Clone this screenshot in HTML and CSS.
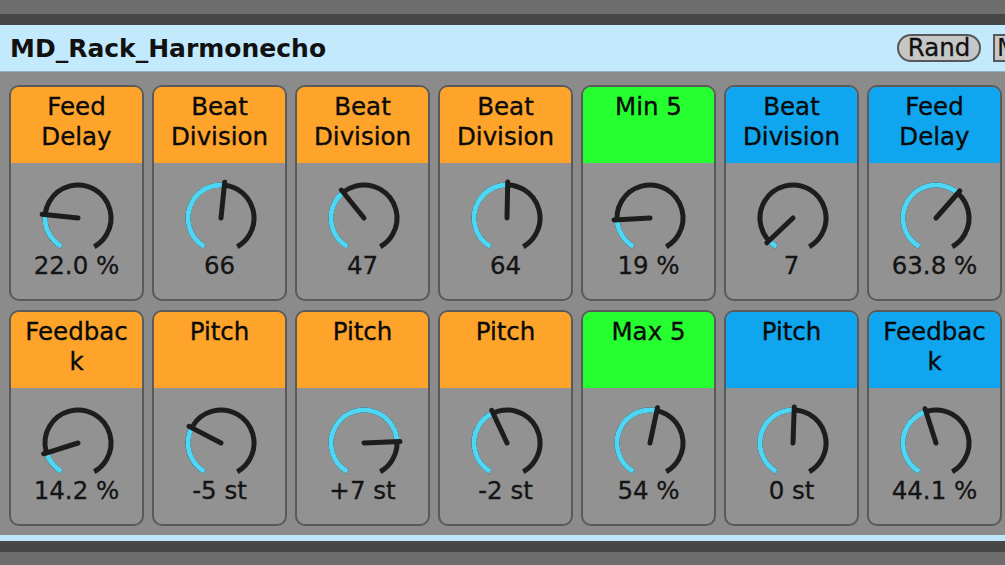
FILE: index.html
```html
<!DOCTYPE html>
<html>
<head>
<meta charset="utf-8">
<link rel="stylesheet" href="styles.css">
</head>
<body>
<div class="band-light"></div>
<div class="band-dark"></div>
<div class="titlebar">
  <div class="title">MD_Rack_Harmonecho</div>
  <div class="btn-rand">Rand</div>
  <div class="btn-map">Map</div>
</div>
<div class="rack">
  <!-- row 1 -->
  <div class="card"><div class="head orange">Feed<br>Delay</div><div class="body">
    <svg class="knob" viewBox="0 0 80 74"><circle class="track" cx="40" cy="40" r="33" transform="rotate(120 40 40)"/><circle class="fill" cx="40" cy="40" r="33" stroke-dasharray="38.01 300" transform="rotate(120 40 40)"/><line class="needle" x1="40" y1="40" x2="40" y2="4" transform="rotate(-84 40 40)"/></svg>
    <div class="val">22.0 %</div></div></div>
  <div class="card"><div class="head orange">Beat<br>Division</div><div class="body">
    <svg class="knob" viewBox="0 0 80 74"><circle class="track" cx="40" cy="40" r="33" transform="rotate(120 40 40)"/><circle class="fill" cx="40" cy="40" r="33" stroke-dasharray="89.80 300" transform="rotate(120 40 40)"/><line class="needle" x1="40" y1="40" x2="40" y2="4" transform="rotate(5.9 40 40)"/></svg>
    <div class="val">66</div></div></div>
  <div class="card"><div class="head orange">Beat<br>Division</div><div class="body">
    <svg class="knob" viewBox="0 0 80 74"><circle class="track" cx="40" cy="40" r="33" transform="rotate(120 40 40)"/><circle class="fill" cx="40" cy="40" r="33" stroke-dasharray="63.95 300" transform="rotate(120 40 40)"/><line class="needle" x1="40" y1="40" x2="40" y2="4" transform="rotate(-39 40 40)"/></svg>
    <div class="val">47</div></div></div>
  <div class="card"><div class="head orange">Beat<br>Division</div><div class="body">
    <svg class="knob" viewBox="0 0 80 74"><circle class="track" cx="40" cy="40" r="33" transform="rotate(120 40 40)"/><circle class="fill" cx="40" cy="40" r="33" stroke-dasharray="87.07 300" transform="rotate(120 40 40)"/><line class="needle" x1="40" y1="40" x2="40" y2="4" transform="rotate(1.2 40 40)"/></svg>
    <div class="val">64</div></div></div>
  <div class="card"><div class="head green">Min 5</div><div class="body">
    <svg class="knob" viewBox="0 0 80 74"><circle class="track" cx="40" cy="40" r="33" transform="rotate(120 40 40)"/><circle class="fill" cx="40" cy="40" r="33" stroke-dasharray="32.83 300" transform="rotate(120 40 40)"/><line class="needle" x1="40" y1="40" x2="40" y2="4" transform="rotate(-93 40 40)"/></svg>
    <div class="val">19 %</div></div></div>
  <div class="card"><div class="head blue">Beat<br>Division</div><div class="body">
    <svg class="knob" viewBox="0 0 80 74"><circle class="track" cx="40" cy="40" r="33" transform="rotate(120 40 40)"/><circle class="fill" cx="40" cy="40" r="33" stroke-dasharray="9.52 300" transform="rotate(120 40 40)"/><line class="needle" x1="40" y1="40" x2="40" y2="4" transform="rotate(-133.5 40 40)"/></svg>
    <div class="val">7</div></div></div>
  <div class="card"><div class="head blue">Feed<br>Delay</div><div class="body">
    <svg class="knob" viewBox="0 0 80 74"><circle class="track" cx="40" cy="40" r="33" transform="rotate(120 40 40)"/><circle class="fill" cx="40" cy="40" r="33" stroke-dasharray="110.24 300" transform="rotate(120 40 40)"/><line class="needle" x1="40" y1="40" x2="40" y2="4" transform="rotate(41.4 40 40)"/></svg>
    <div class="val">63.8 %</div></div></div>
  <!-- row 2 -->
  <div class="card"><div class="head orange">Feedbac<br>k</div><div class="body">
    <svg class="knob" viewBox="0 0 80 74"><circle class="track" cx="40" cy="40" r="33" transform="rotate(120 40 40)"/><circle class="fill" cx="40" cy="40" r="33" stroke-dasharray="24.54 300" transform="rotate(120 40 40)"/><line class="needle" x1="40" y1="40" x2="40" y2="4" transform="rotate(-107.4 40 40)"/></svg>
    <div class="val">14.2 %</div></div></div>
  <div class="card"><div class="head orange">Pitch</div><div class="body">
    <svg class="knob" viewBox="0 0 80 74"><circle class="track" cx="40" cy="40" r="33" transform="rotate(120 40 40)"/><circle class="fill" cx="40" cy="40" r="33" stroke-dasharray="50.40 300" transform="rotate(120 40 40)"/><line class="needle" x1="40" y1="40" x2="40" y2="4" transform="rotate(-62.5 40 40)"/></svg>
    <div class="val">-5 st</div></div></div>
  <div class="card"><div class="head orange">Pitch</div><div class="body">
    <svg class="knob" viewBox="0 0 80 74"><circle class="track" cx="40" cy="40" r="33" transform="rotate(120 40 40)"/><circle class="fill" cx="40" cy="40" r="33" stroke-dasharray="136.79 300" transform="rotate(120 40 40)"/><line class="needle" x1="40" y1="40" x2="40" y2="4" transform="rotate(87.5 40 40)"/></svg>
    <div class="val">+7 st</div></div></div>
  <div class="card"><div class="head orange">Pitch</div><div class="body">
    <svg class="knob" viewBox="0 0 80 74"><circle class="track" cx="40" cy="40" r="33" transform="rotate(120 40 40)"/><circle class="fill" cx="40" cy="40" r="33" stroke-dasharray="72.00 300" transform="rotate(120 40 40)"/><line class="needle" x1="40" y1="40" x2="40" y2="4" transform="rotate(-25 40 40)"/></svg>
    <div class="val">-2 st</div></div></div>
  <div class="card"><div class="head green">Max 5</div><div class="body">
    <svg class="knob" viewBox="0 0 80 74"><circle class="track" cx="40" cy="40" r="33" transform="rotate(120 40 40)"/><circle class="fill" cx="40" cy="40" r="33" stroke-dasharray="93.31 300" transform="rotate(120 40 40)"/><line class="needle" x1="40" y1="40" x2="40" y2="4" transform="rotate(12 40 40)"/></svg>
    <div class="val">54 %</div></div></div>
  <div class="card"><div class="head blue">Pitch</div><div class="body">
    <svg class="knob" viewBox="0 0 80 74"><circle class="track" cx="40" cy="40" r="33" transform="rotate(120 40 40)"/><circle class="fill" cx="40" cy="40" r="33" stroke-dasharray="86.40 300" transform="rotate(120 40 40)"/><line class="needle" x1="40" y1="40" x2="40" y2="4" transform="rotate(2 40 40)"/></svg>
    <div class="val">0 st</div></div></div>
  <div class="card"><div class="head blue">Feedbac<br>k</div><div class="body">
    <svg class="knob" viewBox="0 0 80 74"><circle class="track" cx="40" cy="40" r="33" transform="rotate(120 40 40)"/><circle class="fill" cx="40" cy="40" r="33" stroke-dasharray="76.20 300" transform="rotate(120 40 40)"/><line class="needle" x1="40" y1="40" x2="40" y2="4" transform="rotate(-17.7 40 40)"/></svg>
    <div class="val">44.1 %</div></div></div>
</div>
<div class="foot-blue"></div>
<div class="band-dark"></div>
<div class="foot-rest"></div>
</body>
</html>
```
FILE: styles.css
```css
html, body {
  margin: 0;
  padding: 0;
}
body {
  width: 1005px;
  height: 565px;
  overflow: hidden;
  background: #8b8b8b;
  font-family: "DejaVu Sans", "Liberation Sans", sans-serif;
  display: flex;
  flex-direction: column;
}
.band-light {
  height: 14px;
  flex: none;
  background: #6d6d6d;
}
.band-dark {
  height: 11px;
  flex: none;
  background: #474747;
}
.titlebar {
  flex: none;
  height: 46px;
  background: #c2e9fc;
  border-bottom: 1px solid #93afbd;
  display: flex;
  align-items: center;
  padding-left: 10px;
  overflow: hidden;
}
.title {
  flex: 1;
  min-width: 0;
  font-size: 25px;
  font-weight: bold;
  color: #111;
  white-space: nowrap;
}
.btn-rand {
  flex: none;
  box-sizing: border-box;
  width: 84px;
  height: 28px;
  border: 2px solid #575757;
  border-radius: 14px;
  background: #c6c6c6;
  color: #111;
  font-size: 24.5px;
  line-height: 23px;
  text-align: center;
  -webkit-text-stroke: 0.3px #111;
}
.btn-map {
  flex: none;
  box-sizing: border-box;
  width: 50px;
  height: 28px;
  margin-left: 12px;
  margin-right: -38px;
  border: 2px solid #575757;
  background: #c6c6c6;
  color: #111;
  font-size: 24.5px;
  line-height: 23px;
  padding-left: 2px;
}
.rack {
  flex: none;
  height: 463px;
  box-sizing: border-box;
  padding: 13px 0 0 9px;
  display: grid;
  grid-template-columns: repeat(7, 135px);
  grid-auto-rows: 216px;
  column-gap: 8px;
  row-gap: 9px;
  align-content: start;
}
.card {
  box-sizing: border-box;
  border: 2px solid #5a5a5a;
  border-radius: 10px;
  overflow: hidden;
  background: #929292;
  display: flex;
  flex-direction: column;
}
.head {
  flex: none;
  height: 76px;
  box-sizing: border-box;
  padding-top: 5px;
  text-align: center;
  font-size: 24.5px;
  line-height: 30px;
  color: #0a0a0a;
  -webkit-text-stroke: 0.35px #0a0a0a;
}
.orange { background: #ffa42b; }
.green { background: #26ff2f; }
.blue { background: #10a6ef; }
.body {
  flex: 1;
  display: flex;
  flex-direction: column;
  align-items: center;
}
.knob {
  width: 80px;
  height: 74px;
  margin-top: 15px;
  margin-left: 3px;
  display: block;
}
.track {
  fill: none;
  stroke: #1d1d1d;
  stroke-width: 5;
  stroke-dasharray: 172.79 300;
}
.fill {
  fill: none;
  stroke: #4dd7f4;
  stroke-width: 5;
}
.needle {
  stroke: #1d1d1d;
  stroke-width: 5;
  stroke-linecap: round;
}
.val {
  font-size: 24.5px;
  line-height: 28px;
  color: #141414;
  text-align: center;
  -webkit-text-stroke: 0.3px #141414;
}
.foot-blue {
  flex: none;
  height: 6px;
  background: #bde6fa;
}
.foot-rest {
  flex: 1;
  background: #6d6d6d;
}
```
